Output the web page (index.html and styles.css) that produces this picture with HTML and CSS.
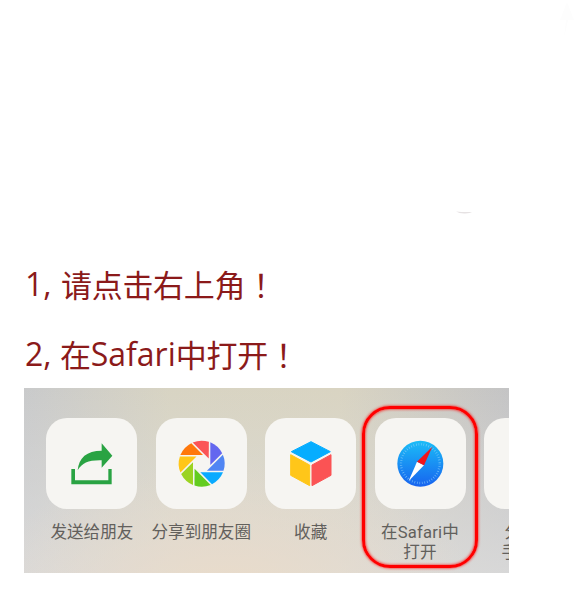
FILE: index.html
```html
<!DOCTYPE html>
<html lang="zh-CN">
<head>
<meta charset="utf-8">
<title>在Safari中打开</title>
<link rel="stylesheet" href="styles.css">
</head>
<body>
<main class="guide">
  <div class="pointer">
    <svg class="tip" viewBox="0 0 20 40"><path d="M10 2L17 20H11L7 38L9 20H3Z" fill="#fdfdfd"/></svg>
    <svg class="tail" viewBox="0 0 16 4"><path d="M0 .5Q8 1.4 16 1Q14 2.6 8 2.4Q3 2.4 0 .5Z" fill="#e6e2e3"/></svg>
  </div>
  <h1 class="step"><span class="num one">1,</span><span class="han">请点击右上角<span class="mark">！</span></span></h1>
  <h1 class="step second"><span class="num">2,</span><span class="han">在</span><span class="latin">Safari</span><span class="han">中打开<span class="mark">！</span></span></h1>
  <section class="sheet">
    <div class="item">
      <div class="tile"><svg viewBox="0 0 273 273"><path fill="#29a343" d="M76 153H87V187H187V153H197V199H76ZM95 157C98 119 122 98 167 98V76L199 113L167 149V127C128 126 109 134 95 157Z"/></svg></div>
      <p>发送给朋友</p>
    </div>
    <div class="item">
      <div class="tile"><svg viewBox="0 0 273 273">
        <defs><path id="blade" d="M26-64A69 69 0 0 1 61.5-31L26 4Z"/></defs>
        <g transform="translate(137 137)">
          <use href="#blade" fill="#6467ef"/>
          <use href="#blade" fill="#5085f3" transform="rotate(45)"/>
          <use href="#blade" fill="#09aaff" transform="rotate(90)"/>
          <use href="#blade" fill="#63cc20" transform="rotate(135)"/>
          <use href="#blade" fill="#9bd322" transform="rotate(180)"/>
          <use href="#blade" fill="#ffc619" transform="rotate(225)"/>
          <use href="#blade" fill="#ff780b" transform="rotate(270)"/>
          <use href="#blade" fill="#fb5456" transform="rotate(315)"/>
        </g></svg></div>
      <p>分享到朋友圈</p>
    </div>
    <div class="item">
      <div class="tile"><svg viewBox="0 0 273 273" stroke-width="3" stroke-linejoin="round">
        <path fill="#06adff" stroke="#06adff" d="M138 71L196 101L138 132L79 101Z"/>
        <path fill="#ffc619" stroke="#ffc619" d="M77 110L134 141V203L77 172Z"/>
        <path fill="#fb5354" stroke="#fb5354" d="M198 110L141 141V203L198 172Z"/>
      </svg></div>
      <p>收藏</p>
    </div>
    <div class="item chosen">
      <div class="tile"><svg viewBox="0 0 273 273">
        <defs><linearGradient id="sky" x2="0" y2="1"><stop stop-color="#1bbdf7"/><stop offset="1" stop-color="#1763ef"/></linearGradient></defs>
        <circle cx="136" cy="137" r="69" fill="url(#sky)"/>
        <circle cx="136" cy="137" r="58" fill="none" stroke="#8fd0fb" stroke-width="7" stroke-dasharray="2 5.6" opacity=".75"/>
        <path fill="#fff" d="M101 189L126 131L147 142Z"/>
        <path fill="#f31419" d="M172 86L126 131L147 142Z"/>
      </svg></div>
      <p>在Safari中<br>打开</p>
    </div>
    <div class="item">
      <div class="tile"></div>
      <p>分享到<br>手机QQ</p>
    </div>
  </section>
</main>
</body>
</html>
```
FILE: styles.css
```css
body {
  margin: 0;
  background: #fff;
  overflow: hidden;
}

.guide {
  width: 579px;
  height: 595px;
}

.pointer {
  position: relative;
  height: 249px;
}

.tip {
  position: absolute;
  left: 557px;
  top: 0;
  width: 20px;
  height: 40px;
}

.tail {
  position: absolute;
  left: 456px;
  top: 211px;
  width: 16px;
  height: 4px;
}

.step {
  display: flex;
  height: 70px;
  margin: 0;
  padding-left: 25px;
  color: #8b1a1a;
  font: 400 31px/70px "Noto Sans CJK SC", sans-serif;
  white-space: nowrap;
}

.second {
  height: 69px;
}

.num,
.latin {
  font-family: "Open Sans", "Noto Sans CJK SC", sans-serif;
  font-size: 32px;
}

.num {
  width: 35px;
}

.one {
  width: 36px;
}

.han {
  letter-spacing: -0.3px;
}

.mark {
  padding-left: 8px;
}

.sheet {
  display: flex;
  gap: 18.4px;
  box-sizing: border-box;
  width: 485px;
  height: 185px;
  margin-left: 24px;
  padding: 30px 0 0 22.4px;
  overflow: hidden;
  background:
    radial-gradient(ellipse 250px 130px at 42% 110%, rgba(235, 219, 200, .9), rgba(235, 219, 200, 0)),
    linear-gradient(to bottom, rgba(222, 222, 222, 0), rgba(222, 222, 222, .75)),
    linear-gradient(to right, #c9cacb, #d8d4c3 30%, #d9d4c2 65%, #c4c4c5);
}

.item {
  position: relative;
  flex: none;
  width: 91px;
}

.tile {
  height: 91px;
  border-radius: 21px;
  background: #f6f5f2;
}

.tile svg {
  display: block;
  width: 91px;
  height: 91px;
}

.item p {
  margin: 14px -10px 0;
  color: #62605c;
  font: 400 16.6px/20px Roboto, "Noto Sans CJK SC", sans-serif;
  text-align: center;
  white-space: nowrap;
}

.chosen p {
  letter-spacing: 0.2px;
}

.chosen::after {
  content: "";
  position: absolute;
  box-sizing: border-box;
  left: -12.6px;
  top: -12.5px;
  width: 116px;
  height: 162px;
  border: 3px solid #f00;
  border-radius: 28px;
  box-shadow: 0 0 3px #f00, inset 0 0 3px #f00;
}
```
